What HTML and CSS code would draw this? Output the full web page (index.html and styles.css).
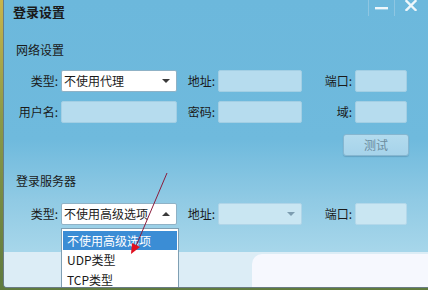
FILE: index.html
```html
<!DOCTYPE html>
<html>
<head>
<meta charset="utf-8">
<link rel="stylesheet" href="styles.css">
</head>
<body>
<div class="desk">
  <div class="win">
    <div class="titlebar">
      <div class="title">登录设置</div>
      <div class="wbtns">
        <div class="wbtn min"><svg width="13" height="4" viewBox="0 0 13 4"><rect x="0" y="1" width="13" height="2.4" fill="#eef7fb"/></svg></div>
        <div class="wbtn close"><svg width="12" height="11" viewBox="0 0 12 11"><path d="M1.5 1 L10.5 10 M10.5 1 L1.5 10" stroke="#eef7fb" stroke-width="2.4" stroke-linecap="square"/></svg></div>
      </div>
    </div>
    <div class="sect">网络设置</div>
    <div class="grid g1">
      <div class="lbl">类型:</div>
      <div class="sel white"><span class="val">不使用代理</span><span class="tri down"></span></div>
      <div class="lbl">地址:</div>
      <div class="inp"></div>
      <div class="lbl">端口:</div>
      <div class="inp"></div>
      <div class="lbl">用户名:</div>
      <div class="inp"></div>
      <div class="lbl">密码:</div>
      <div class="inp"></div>
      <div class="lbl">域:</div>
      <div class="inp"></div>
    </div>
    <div class="btnrow"><div class="btn">测试</div></div>
    <div class="sect s2">登录服务器</div>
    <div class="grid g2">
      <div class="lbl">类型:</div>
      <div class="sel white"><span class="val">不使用高级选项</span><span class="tri up"></span></div>
      <div class="lbl">地址:</div>
      <div class="sel pale"><span class="val"></span><span class="tri down grey"></span></div>
      <div class="lbl">端口:</div>
      <div class="inp pale"></div>
    </div>
    <div class="band"></div>
    <div class="blob"></div>
    <div class="dropdown">
      <div class="item hl">不使用高级选项</div>
      <div class="item">UDP类型</div>
      <div class="item">TCP类型</div>
    </div>
    <svg class="arrow" width="428" height="290" viewBox="0 0 428 290">
      <line x1="167" y1="173" x2="136" y2="246" stroke="#8a1c3c" stroke-width="1"/>
      <polygon points="131,254 132,243 140,247" fill="#e01020"/>
    </svg>
  </div>
</div>
</body>
</html>
```

FILE: styles.css
```css
html, body {
  margin: 0;
  padding: 0;
}
body {
  width: 428px;
  height: 290px;
  overflow: hidden;
  font-family: "Noto Sans CJK SC", "Microsoft YaHei", sans-serif;
  font-size: 12px;
  color: #1a1a1a;
}
.desk {
  width: 428px;
  height: 290px;
  background: linear-gradient(to bottom, #c9b54a 0, #8c9a48 40%, #5f7a3e 100%);
  padding-left: 3px;
  box-sizing: border-box;
}
.win {
  position: relative;
  height: 287px;
  border-left: 1px solid #6a7c86;
  border-bottom: 1px solid #6a7c86;
  border-bottom-left-radius: 4px;
  background: linear-gradient(to bottom, #6cb8dc 0, #6fbadd 140px, #90cae4 200px, #a6d6ea 250px);
  overflow: hidden;
}
.titlebar {
  height: 26px;
  display: flex;
  justify-content: space-between;
  align-items: flex-start;
}
.title {
  padding-left: 9px;
  margin-top: 3px;
  font-size: 13px;
  font-weight: bold;
  line-height: 18px;
  color: #1a1a1a;
}
.wbtns {
  display: flex;
  margin-right: 8px;
}
.wbtn {
  height: 16px;
  width: 25px;
  border-left: 1px solid #8ec6e2;
  display: flex;
  justify-content: center;
  align-items: center;
}
.wbtn.close {
  width: 26px;
  align-items: flex-start;
  justify-content: flex-start;
  padding-left: 10px;
  box-sizing: border-box;
}
.wbtn.close svg {
  margin-top: 0px;
}
.sect {
  margin-top: 16px;
  padding-left: 12px;
  line-height: 16px;
  height: 16px;
}
.s2 {
  margin-top: 17px;
}
.grid {
  display: grid;
  grid-template-columns: 47px 116px 41px 84px 53px 52px;
  grid-auto-rows: 22px;
  row-gap: 9px;
  padding-left: 10px;
}
.g1 { margin-top: 12px; }
.g2 { margin-top: 14px; }
.lbl {
  text-align: right;
  padding-right: 3px;
  line-height: 22px;
  white-space: nowrap;
}
.inp {
  background: #b6dcee;
  border: 1px solid #a3cfe4;
  border-radius: 2px;
}
.inp.pale {
  background: #c9e6f2;
  border-color: #b3d8ea;
}
.sel {
  border: 1px solid #8fb2c6;
  border-radius: 2px;
  display: flex;
  align-items: center;
  justify-content: space-between;
  padding: 0 6px 0 2px;
  line-height: 20px;
}
.sel.white { background: #ffffff; }
.sel.pale {
  background: #c9e6f2;
  border-color: #b0d5e8;
}
.tri {
  width: 0;
  height: 0;
  border-left: 4px solid transparent;
  border-right: 4px solid transparent;
}
.tri.down { border-top: 4px solid #3a3a3a; }
.tri.up { border-bottom: 4px solid #3a3a3a; }
.tri.grey { border-top-color: #7d9db0; }
.btnrow {
  display: flex;
  justify-content: flex-end;
  padding-right: 19px;
  margin-top: 11px;
}
.btn {
  width: 64px;
  height: 20px;
  border: 1px solid #86b6d0;
  border-radius: 3px;
  background: linear-gradient(to bottom, #b3dbee, #a6d3ea);
  color: #6b8c9e;
  text-align: center;
  line-height: 20px;
  box-shadow: 0 1px 1px rgba(60, 110, 140, 0.35);
}
.band {
  margin-top: 27px;
  height: 40px;
  background: #dcedf6;
}
.blob {
  position: absolute;
  left: 248px;
  top: 254px;
  width: 190px;
  height: 40px;
  background: #f6f8fe;
  border-radius: 10px 0 0 8px;
}
.dropdown {
  position: absolute;
  left: 57px;
  top: 228px;
  width: 114px;
  height: 70px;
  background: #ffffff;
  border: 1px solid #7f9fb3;
  padding: 2px 1px 0 1px;
}
.item {
  height: 20px;
  line-height: 20px;
  padding-left: 4px;
  color: #1a1a1a;
}
.item.hl {
  background: #3b8dd5;
  color: #ffffff;
  height: 19px;
  line-height: 19px;
}
.arrow {
  position: absolute;
  left: -4px;
  top: 0;
}
```
